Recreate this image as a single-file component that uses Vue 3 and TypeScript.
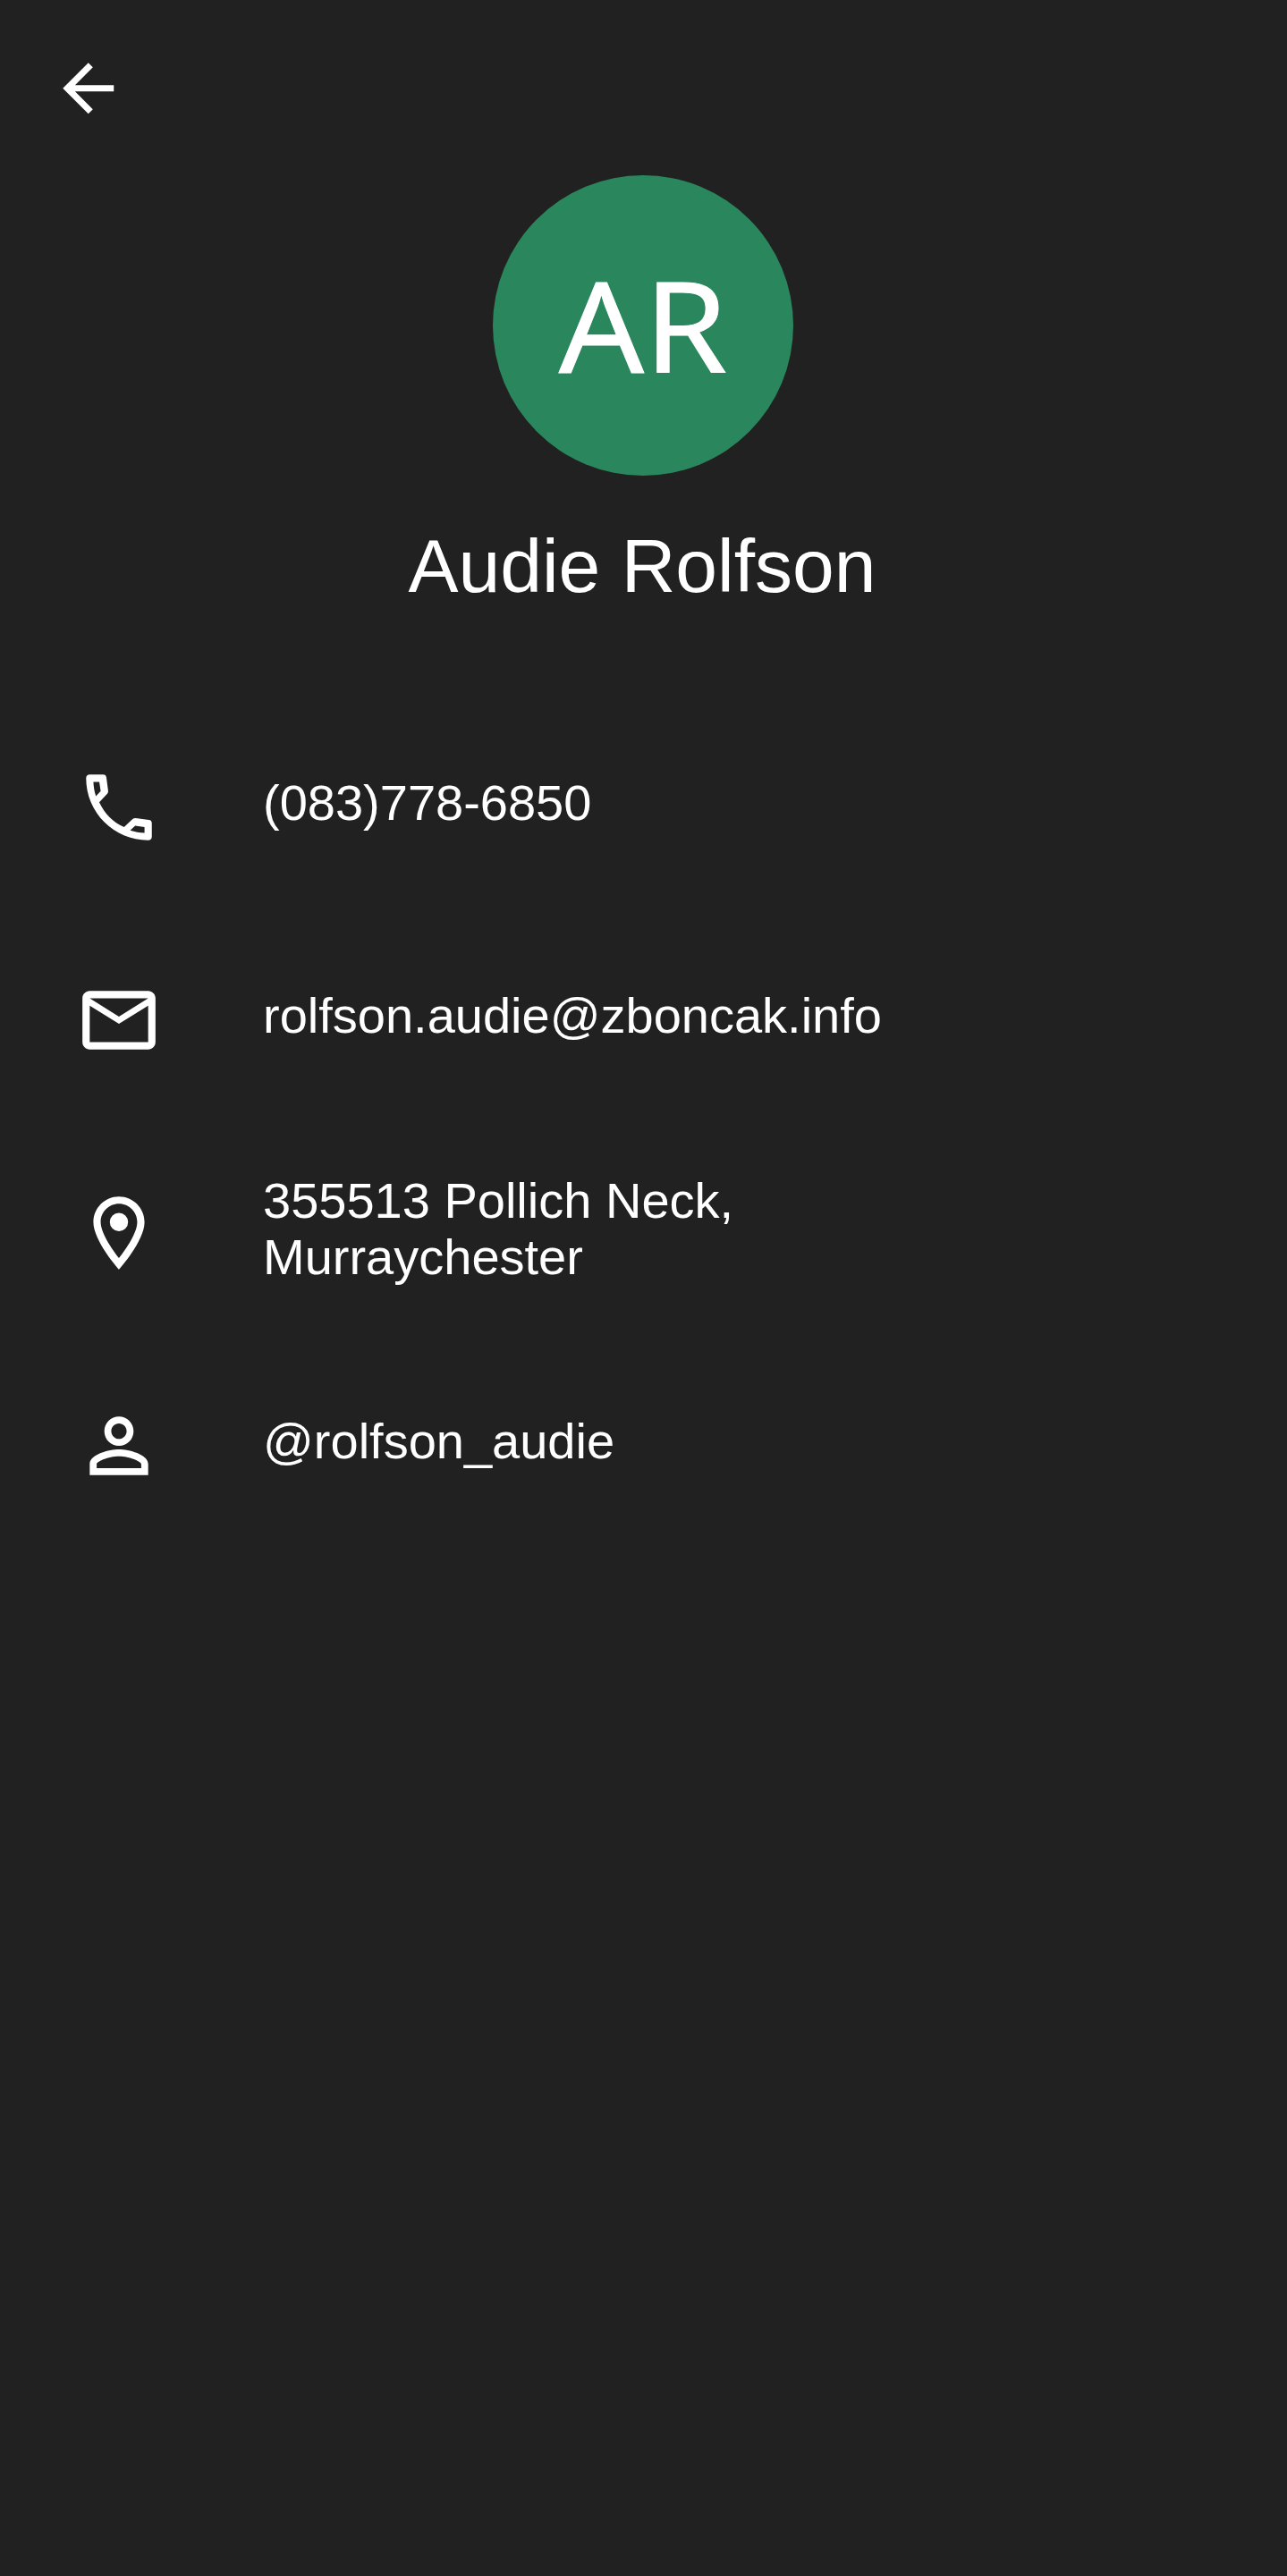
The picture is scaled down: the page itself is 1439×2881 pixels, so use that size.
<script setup lang="ts">
interface ContactRow {
  id: string
  icon: string
  lines: string[]
}

const name = 'Audie Rolfson'
const initials = 'AR'

const rows: ContactRow[] = [
  {
    id: 'phone',
    icon: 'M4 3H7.65C8.2 3 8.5 3.3 8.56 3.8L9.04 7.4C9.07 7.75 9 8 8.8 8.25L6.6 10.6C8.2 13.9 10.3 16 13.4 17.4L15.75 15.2C16 15 16.25 14.93 16.6 14.96L20.2 15.44C20.7 15.5 21 15.8 21 16.35V20C21 20.6 20.6 21 20 21C10.6 21 3 13.4 3 4C3 3.4 3.4 3 4 3ZM5 5C5.05 6.3 5.3 7.7 5.7 8.93L7 7.55L6.62 5ZM19 19V17.38L16.45 17L15.07 18.3C16.3 18.7 17.7 18.95 19 19Z',
    lines: ['(083)778-6850'],
  },
  {
    id: 'email',
    icon: 'M4 4C2.9 4 2 4.9 2 6V18C2 19.1 2.9 20 4 20H20C21.1 20 22 19.1 22 18V6C22 4.9 21.1 4 20 4ZM4 6H20L12 11ZM4 8L12 13L20 8V18H4Z',
    lines: ['rolfson.audie@zboncak.info'],
  },
  {
    id: 'address',
    icon: 'M12 2C8.13 2 5 5.13 5 9c0 5.25 7 13 7 13s7-7.75 7-13c0-3.87-3.13-7-7-7zM7 9c0-2.76 2.24-5 5-5s5 2.24 5 5c0 2.88-2.88 7.19-5 9.88C9.92 16.21 7 11.85 7 9zM12 6.5a2.5 2.5 0 1 0 0 5a2.5 2.5 0 1 0 0-5z',
    lines: ['355513 Pollich Neck,', 'Murraychester'],
  },
  {
    id: 'username',
    icon: 'M12 5.9c1.16 0 2.1.94 2.1 2.1s-.94 2.1-2.1 2.1S9.9 9.16 9.9 8s.94-2.1 2.1-2.1m0 9c2.97 0 6.1 1.46 6.1 2.1v1.1H5.9V17c0-.64 3.13-2.1 6.1-2.1M12 4C9.79 4 8 5.79 8 8s1.79 4 4 4 4-1.79 4-4-1.79-4-4-4zm0 9c-2.67 0-8 1.34-8 4v3h16v-3c0-2.66-5.33-4-8-4z',
    lines: ['@rolfson_audie'],
  },
]
</script>

<template>
  <main class="screen">
    <header class="toolbar">
      <button class="back" type="button" aria-label="Back">
        <svg viewBox="0 0 24 24"><path d="M20 11H7.83l5.59-5.59L12 4l-8 8 8 8 1.41-1.41L7.83 13H20v-2z" /></svg>
      </button>
    </header>
    <section class="profile">
      <div class="avatar"><span class="initials">{{ initials }}</span></div>
      <h1 class="name">{{ name }}</h1>
    </section>
    <ul class="details">
      <li v-for="row in rows" :key="row.id" class="row">
        <svg class="icon" viewBox="0 0 24 24"><path fill-rule="evenodd" :d="row.icon" /></svg>
        <div class="value">
          <div v-for="line in row.lines" :key="line">{{ line }}</div>
        </div>
      </li>
    </ul>
  </main>
</template>

<style>
body {
  margin: 0;
  background: #212121;
}
</style>

<style scoped>
.screen {
  box-sizing: border-box;
  width: 1439px;
  height: 2881px;
  background: #212121;
  color: #fff;
  font-family: "Liberation Sans", Arial, sans-serif;
}
svg {
  display: block;
  fill: currentColor;
}
.toolbar {
  box-sizing: border-box;
  height: 196px;
  padding: 56px 0 0 56px;
}
.back {
  display: block;
  padding: 0;
  border: 0;
  background: none;
  color: inherit;
}
.back svg {
  width: 85.5px;
  height: 85.5px;
}
.profile {
  display: flex;
  flex-direction: column;
  align-items: center;
  width: 1438px;
  height: 588px;
}
.avatar {
  display: flex;
  justify-content: center;
  width: 336px;
  height: 336px;
  border-radius: 50%;
  background: #2a865c;
}
.initials {
  font-family: "Noto Sans", sans-serif;
  font-size: 141px;
  font-weight: 400;
  line-height: 332px;
  transform: scaleX(1.06);
  -webkit-text-stroke: 0.8px #fff;
}
.name {
  margin: 53px 0 0;
  font-size: 84px;
  font-weight: 400;
  line-height: 96px;
  transform: translateX(-1px);
}
.details {
  margin: 0;
  padding: 0;
  list-style: none;
}
.row {
  display: flex;
  align-items: center;
  height: 238px;
  padding-left: 84px;
}
.icon {
  width: 98px;
  height: 98px;
  flex: none;
}
.value {
  margin-left: 112px;
  padding-bottom: 11px;
  font-size: 56px;
  line-height: 63px;
  white-space: nowrap;
}
</style>
